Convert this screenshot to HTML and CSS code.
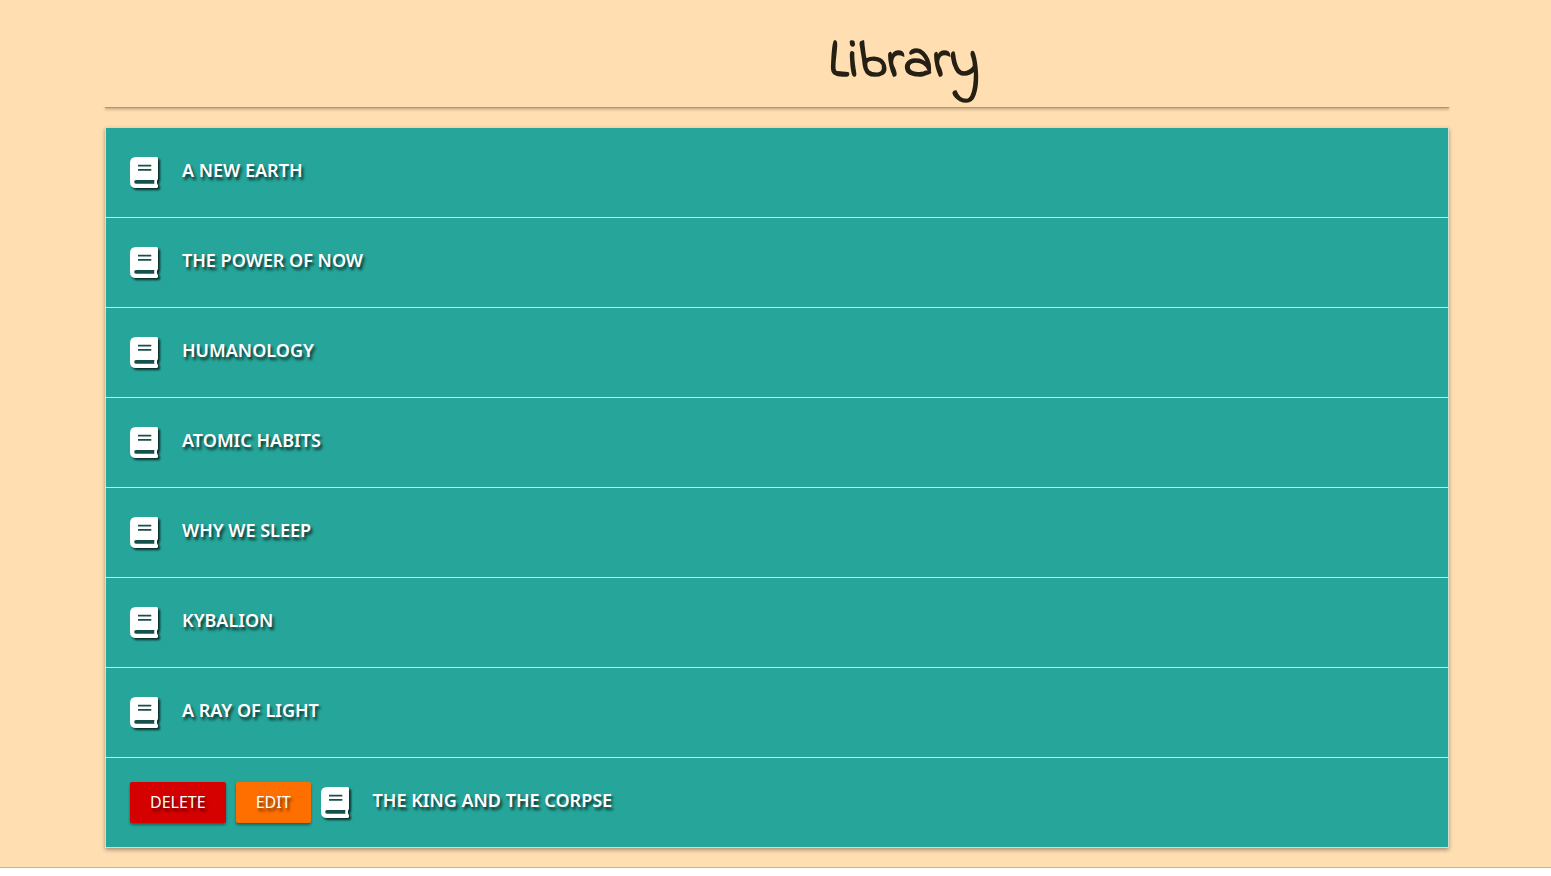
FILE: index.html
```
<!DOCTYPE html>
<html lang="en">
<head>
<meta charset="utf-8">
<meta name="viewport" content="width=device-width, initial-scale=1">
<title>Library</title>
<link rel="stylesheet" href="styles.css">
</head>
<body>
<svg class="sprite" aria-hidden="true">
  <symbol id="book" viewBox="0 0 28 31">
    <path fill="#15514c" d="M4 7H24.800V27H4Z"/>
    <path fill-rule="evenodd" d="M6 0H26.500Q28 0 28 1.500V21.500Q28 22.500 27.200 23.200Q26.600 25 27.200 27Q28 27.600 28 28.500V29.500Q28 31 26.500 31H6Q0 31 0 25V6Q0 0 6 0ZM8 7.800H21.300V9.500H8ZM8 12H21.300V13.700H8ZM6 23H24.400Q24 25 24.400 26.800H6Q4.200 26.600 4.200 24.900Q4.200 23.200 6 23Z"/>
  </symbol>
</svg>
<main class="page">
  <header class="header">
    <h1 class="title">Library</h1>
  </header>
  <hr class="rule">
  <ul class="books">
    <li class="book"><svg class="icon" aria-hidden="true"><use href="#book"/></svg><span class="name">A NEW EARTH</span></li>
    <li class="book"><svg class="icon" aria-hidden="true"><use href="#book"/></svg><span class="name">THE POWER OF NOW</span></li>
    <li class="book"><svg class="icon" aria-hidden="true"><use href="#book"/></svg><span class="name">HUMANOLOGY</span></li>
    <li class="book"><svg class="icon" aria-hidden="true"><use href="#book"/></svg><span class="name">ATOMIC HABITS</span></li>
    <li class="book"><svg class="icon" aria-hidden="true"><use href="#book"/></svg><span class="name">WHY WE SLEEP</span></li>
    <li class="book"><svg class="icon" aria-hidden="true"><use href="#book"/></svg><span class="name">KYBALION</span></li>
    <li class="book"><svg class="icon" aria-hidden="true"><use href="#book"/></svg><span class="name">A RAY OF LIGHT</span></li>
    <li class="book">
      <div class="actions">
        <button class="btn btn-delete" type="button">DELETE</button>
        <button class="btn btn-edit" type="button">EDIT</button>
      </div>
      <svg class="icon" aria-hidden="true"><use href="#book"/></svg><span class="name">THE KING AND THE CORPSE</span>
    </li>
  </ul>
</main>
</body>
</html>
```
FILE: styles.css
```
* { box-sizing: border-box; }

body {
  margin: 0;
  background: #fff;
  font-family: "Segoe UI", "Noto Sans", "Open Sans", sans-serif;
}

.sprite {
  position: absolute;
  width: 0;
  height: 0;
}

.page {
  padding: 0 102px 19px 105px;
  background: #ffdfb1;
  border-bottom: 1px solid #e9b440;
}

.header {
  padding: 28px 0 8px 254px;
}

.rule {
  height: 1px;
  margin: 0;
  background: #b8935c;
  border: 0;
  box-shadow: 0 1px 3px rgba(0, 0, 0, 0.6);
  clip-path: inset(0 -3px -5px);
}

.title {
  margin: 0;
  color: #262014;
  font-family: "Indie Flower", cursive;
  font-size: 54px;
  font-weight: 700;
  line-height: 71px;
  text-align: center;
}

.books {
  margin: 19px 0 0;
  padding: 0;
  list-style: none;
  border: 1px solid #d5dccb;
  box-shadow: 0 2px 4px rgba(0, 0, 0, 0.35);
}

.book {
  display: flex;
  align-items: center;
  min-height: 90px;
  padding: 0 24px 1px;
  color: #fff;
  background: #26a69a;
  border-bottom: 1px solid #e0e0e0;
}

.book:last-child {
  min-height: 89px;
  border-bottom: 0;
}

.icon {
  flex: none;
  width: 28px;
  height: 31px;
  fill: #fff;
  filter: drop-shadow(2px 2px 1px rgba(0, 0, 0, 0.75));
}

.name {
  margin-left: 24px;
  padding-bottom: 4px;
  font-size: 18px;
  font-weight: 600;
  line-height: 24px;
  text-shadow: 2px 3px 3px rgba(0, 0, 0, 0.7);
}

.actions {
  display: flex;
  gap: 10px;
  margin-right: 10px;
}

.btn {
  height: 41px;
  padding: 0 20px;
  color: #fff;
  font-family: inherit;
  font-size: 16px;
  text-shadow: 2px 3px 3px rgba(0, 0, 0, 0.6);
  border: 0;
  border-radius: 2px;
  box-shadow: 0 2px 3px rgba(0, 0, 0, 0.4);
}

.btn-delete { background: #d50000; }
.btn-edit { background: #ff6f00; }
```
